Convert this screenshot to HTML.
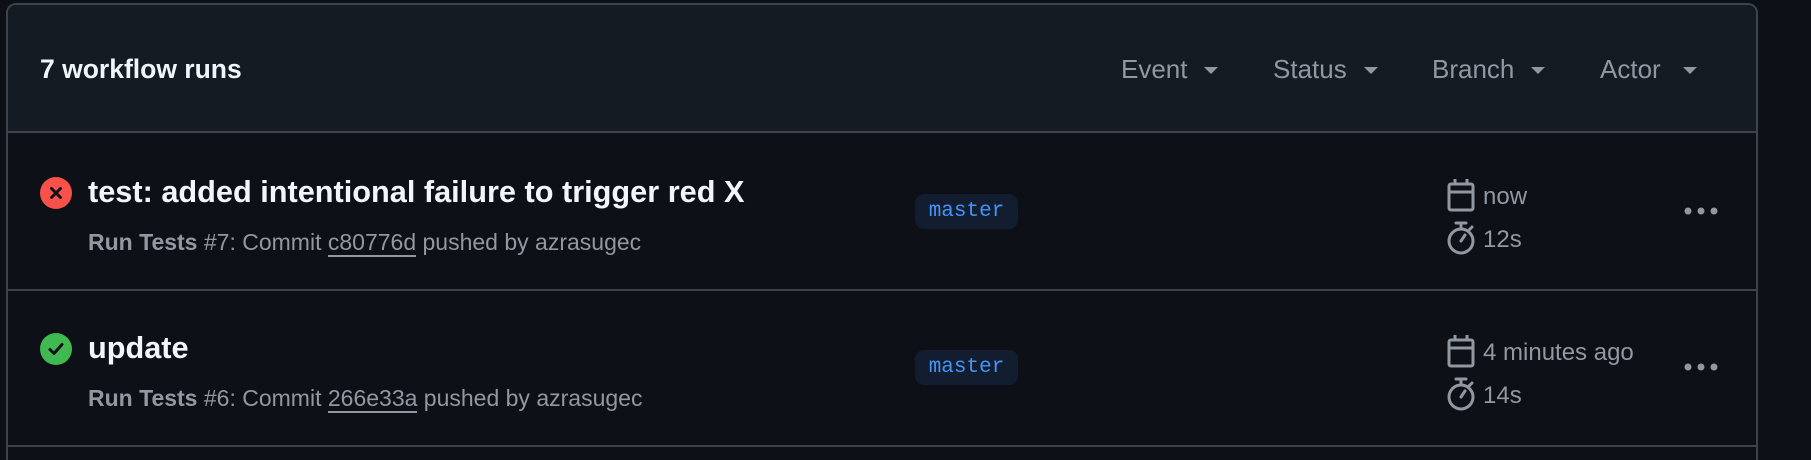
<!DOCTYPE html>
<html><head><meta charset="utf-8"><style>
html,body{margin:0;padding:0;width:1811px;height:460px;overflow:hidden;background:#0d1117;font-family:"Liberation Sans",sans-serif;position:relative;}
.card{position:absolute;left:6px;top:3px;width:1752px;height:457px;border:2px solid #3d444d;border-bottom:none;border-radius:10px 10px 0 0;background:#0d1117;overflow:hidden;box-sizing:border-box;}
.hdr{position:absolute;left:0;top:0;right:0;height:126px;background:#151b23;border-bottom:2px solid #3d444d;}
.t{position:absolute;white-space:nowrap;}
.sep{position:absolute;left:0;right:0;height:2px;background:#3d444d;}
.badge{position:absolute;left:907px;width:103px;height:35px;background:#121d2f;border-radius:9px;color:#4493f8;font-family:"Liberation Mono",monospace;font-size:21px;line-height:35px;text-align:center;}
.gray{color:#9198a1;}
.f{font-size:26px;top:49px;}
.tri{display:inline-block;width:0;height:0;border-left:7px solid transparent;border-right:7px solid transparent;border-top:7px solid #9198a1;position:absolute;top:62px;}
.tm{font-size:24px;}
</style></head><body>
<div class="card">
 <div class="hdr">
  <div class="t" style="left:32px;top:49px;font-size:26.5px;font-weight:bold;color:#f0f6fc;">7 workflow runs</div>
  <div class="t gray f" style="left:1113px;">Event</div><span class="tri" style="left:1196px"></span>
  <div class="t gray f" style="left:1265px;">Status</div><span class="tri" style="left:1356px"></span>
  <div class="t gray f" style="left:1424px;">Branch</div><span class="tri" style="left:1523px"></span>
  <div class="t gray f" style="left:1592px;">Actor</div><span class="tri" style="left:1675px"></span>
 </div>
 <!-- row 1 -->
 <svg style="position:absolute;left:31px;top:171px" width="34" height="34" viewBox="0 0 34 34"><circle cx="17" cy="17" r="16" fill="#f85149"/><path d="M12.5 12.5L21.5 21.5M21.5 12.5L12.5 21.5" stroke="#0d1117" stroke-width="3" stroke-linecap="round"/></svg>
 <div class="t" style="left:80px;top:169px;font-size:30.7px;font-weight:bold;color:#f0f6fc;">test: added intentional failure to trigger red X</div>
 <div class="t gray" style="left:80px;top:224px;font-size:23px;"><b>Run Tests</b> #7: Commit <span style="border-bottom:2px solid #9198a1">c80776d</span> pushed by azrasugec</div>
 <div class="badge" style="top:189px">master</div>
 <svg style="position:absolute;left:1438px;top:173px" width="30" height="34" viewBox="0 0 30 34"><rect x="3" y="6" width="24" height="26" rx="2" fill="none" stroke="#9198a1" stroke-width="3"/><path d="M3 14H27M9 1V7M21 1V7" stroke="#9198a1" stroke-width="3"/></svg>
 <div class="t gray tm" style="left:1475px;top:178px;">now</div>
 <svg style="position:absolute;left:1438px;top:215px" width="30" height="36" viewBox="0 0 30 36"><circle cx="15" cy="21" r="12" fill="none" stroke="#9198a1" stroke-width="3"/><path d="M10 3H20M15 3V9M26 7L23 10M15 21L19 15" stroke="#9198a1" stroke-width="3" stroke-linecap="round"/></svg>
 <div class="t gray tm" style="left:1475px;top:221px;">12s</div>
 <svg style="position:absolute;left:1675px;top:201px" width="38" height="10"><circle cx="5" cy="5" r="3.5" fill="#9198a1"/><circle cx="18" cy="5" r="3.5" fill="#9198a1"/><circle cx="31" cy="5" r="3.5" fill="#9198a1"/></svg>
 <div class="sep" style="top:284px"></div>
 <!-- row 2 -->
 <svg style="position:absolute;left:31px;top:327px" width="34" height="34" viewBox="0 0 34 34"><circle cx="17" cy="17" r="16" fill="#3fb950"/><path d="M11 17.5L15 21.5L23 12.5" fill="none" stroke="#0d1117" stroke-width="3" stroke-linecap="round" stroke-linejoin="round"/></svg>
 <div class="t" style="left:80px;top:325px;font-size:30.7px;font-weight:bold;color:#f0f6fc;">update</div>
 <div class="t gray" style="left:80px;top:380px;font-size:23px;"><b>Run Tests</b> #6: Commit <span style="border-bottom:2px solid #9198a1">266e33a</span> pushed by azrasugec</div>
 <div class="badge" style="top:345px">master</div>
 <svg style="position:absolute;left:1438px;top:329px" width="30" height="34" viewBox="0 0 30 34"><rect x="3" y="6" width="24" height="26" rx="2" fill="none" stroke="#9198a1" stroke-width="3"/><path d="M3 14H27M9 1V7M21 1V7" stroke="#9198a1" stroke-width="3"/></svg>
 <div class="t gray tm" style="left:1475px;top:334px;">4 minutes ago</div>
 <svg style="position:absolute;left:1438px;top:371px" width="30" height="36" viewBox="0 0 30 36"><circle cx="15" cy="21" r="12" fill="none" stroke="#9198a1" stroke-width="3"/><path d="M10 3H20M15 3V9M26 7L23 10M15 21L19 15" stroke="#9198a1" stroke-width="3" stroke-linecap="round"/></svg>
 <div class="t gray tm" style="left:1475px;top:377px;">14s</div>
 <svg style="position:absolute;left:1675px;top:357px" width="38" height="10"><circle cx="5" cy="5" r="3.5" fill="#9198a1"/><circle cx="18" cy="5" r="3.5" fill="#9198a1"/><circle cx="31" cy="5" r="3.5" fill="#9198a1"/></svg>
 <div class="sep" style="top:440px"></div>
</div>
</body></html>
